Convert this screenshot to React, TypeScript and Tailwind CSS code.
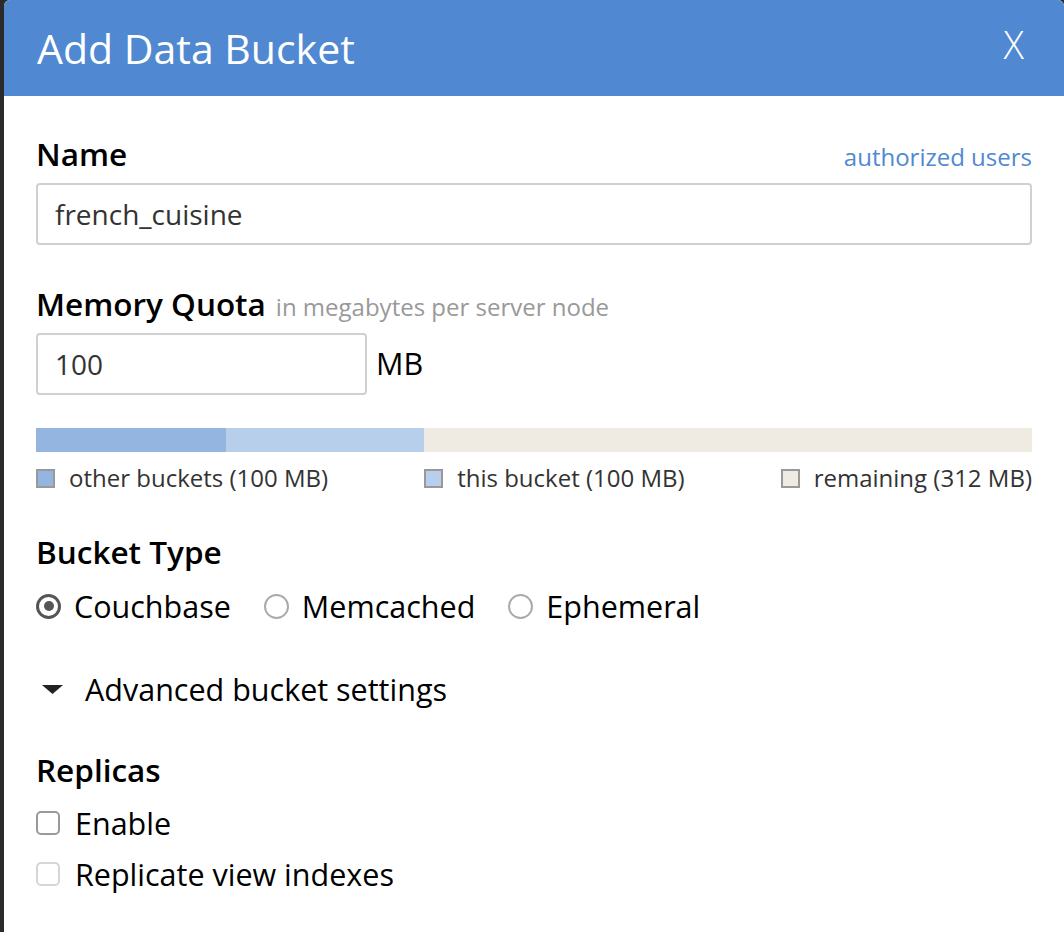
import React from 'react';

function Radio({ label, checked }: { label: string; checked?: boolean }) {
  return (
    <label className="flex items-center gap-[13px]">
      <span
        className={
          checked
            ? 'flex h-[25px] w-[25px] items-center justify-center rounded-full border-[3px] border-[#555]'
            : 'flex h-[25px] w-[25px] items-center justify-center rounded-full border-2 border-[#aaa]'
        }
      >
        {checked && <span className="h-[10px] w-[10px] rounded-full bg-[#555]" />}
      </span>
      <span>{label}</span>
    </label>
  );
}

function Checkbox({ label, faded }: { label: string; faded?: boolean }) {
  return (
    <label className="flex h-[40px] items-center gap-[15px]">
      <span
        className={
          faded
            ? 'h-[24px] w-[24px] rounded-[5px] border-2 border-[#d6d6d6]'
            : 'h-[24px] w-[24px] rounded-[5px] border-2 border-[#999]'
        }
      />
      <span>{label}</span>
    </label>
  );
}

function LegendItem({ label, color }: { label: string; color: string }) {
  return (
    <div className="flex items-center gap-[14px]">
      <span className={`h-[19px] w-[19px] border-2 border-[#999] ${color}`} />
      <span>{label}</span>
    </div>
  );
}

export default function App() {
  return (
    <div
      className="flex min-h-[932px] bg-[#2b2b2b] pl-[4px]"
      style={{ fontFamily: '"Open Sans", "Noto Sans", sans-serif' }}
    >
      <div className="flex-1 overflow-hidden rounded-t-[6px] bg-white">
        {/* Header */}
        <div className="flex h-[96px] items-center justify-between bg-[#5089d1] pl-[33px] pr-[40px] text-white">
          <h2 className="text-[41px] font-medium leading-none">Add Data Bucket</h2>
          <button className="-mt-[8px] text-[38px] font-light leading-none">X</button>
        </div>

        {/* Body */}
        <div className="pl-[32px] pr-[32px] pt-[38px] text-[#222]">
          {/* Name */}
          <div className="flex h-[40px] items-center justify-between">
            <label className="text-[31.5px] font-semibold leading-[40px] text-black">Name</label>
            <a className="mt-[6px] text-[24px] leading-[32px] text-[#5089d1]">authorized users</a>
          </div>
          <div className="mt-[9px] flex h-[62px] items-center rounded-[4px] border-2 border-[#d0d0d0] px-[17px] text-[28px] text-[#333]">
            french_cuisine
          </div>

          {/* Memory quota */}
          <div className="mt-[39px] flex h-[40px] items-baseline gap-[10px]">
            <label className="text-[31.5px] font-semibold leading-[40px] text-black">Memory Quota</label>
            <span className="text-[24px] text-[#999]">in megabytes per server node</span>
          </div>
          <div className="mt-[9px] flex items-center gap-[9px]">
            <div className="flex h-[62px] w-[331px] items-center rounded-[4px] border-2 border-[#d0d0d0] px-[17px] text-[28px] text-[#333]">
              100
            </div>
            <span className="text-[30.5px] text-black">MB</span>
          </div>

          {/* Usage bar */}
          <div className="mt-[33px] flex h-[24px]">
            <div className="w-[190px] bg-[#95b5e1]" />
            <div className="w-[198px] bg-[#b8cfeb]" />
            <div className="flex-1 bg-[#efebe2]" />
          </div>
          <div className="mt-[10px] flex h-[32px] items-center justify-between text-[24px] leading-[32px] text-[#333]">
            <LegendItem label="other buckets (100 MB)" color="bg-[#95b5e1]" />
            <LegendItem label="this bucket (100 MB)" color="bg-[#b8cfeb]" />
            <LegendItem label="remaining (312 MB)" color="bg-[#efebe2]" />
          </div>

          {/* Bucket type */}
          <div className="mt-[38px] text-[31.5px] font-semibold leading-[40px] text-black">Bucket Type</div>
          <div className="mt-[14px] flex h-[40px] items-center gap-[33px] text-[30.5px] leading-[40px] text-black">
            <Radio label="Couchbase" checked />
            <Radio label="Memcached" />
            <Radio label="Ephemeral" />
          </div>

          {/* Advanced */}
          <div className="mt-[43px] flex h-[40px] items-center gap-[22px] pl-[6px] text-[30.5px] leading-[40px] text-black">
            <svg width="21" height="9" viewBox="0 0 21 9">
              <path d="M0 0 L21 0 L10.5 9 Z" fill="#222" />
            </svg>
            <span>Advanced bucket settings</span>
          </div>

          {/* Replicas */}
          <div className="mt-[41px] text-[31.5px] font-semibold leading-[40px] text-black">Replicas</div>
          <div className="mt-[13px] flex flex-col gap-[11px] text-[30.5px] leading-[40px] text-black">
            <Checkbox label="Enable" />
            <Checkbox label="Replicate view indexes" faded />
          </div>
        </div>
      </div>
    </div>
  );
}
